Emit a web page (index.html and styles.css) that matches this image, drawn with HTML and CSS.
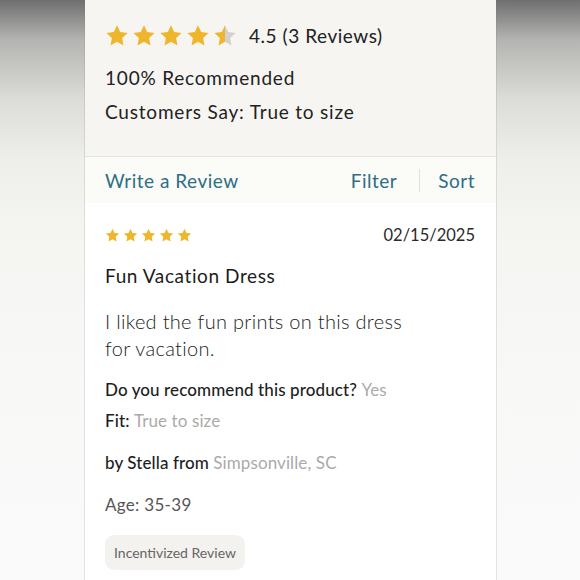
FILE: index.html
```html
<!DOCTYPE html>
<html>
<head>
<meta charset="utf-8">
<link rel="stylesheet" href="styles.css">
</head>
<body>
<div class="page">
  <div class="panel">
    <section class="summary">
      <div class="rating-row">
        <div class="stars-lg">
          <svg viewBox="0 0 24 24" class="star"><path class="on" d="M12 1.2l3.2 6.8 7.4.9-5.5 5.1 1.4 7.4L12 17.8l-6.5 3.6 1.4-7.4L1.4 8.9l7.4-.9z"/></svg>
          <svg viewBox="0 0 24 24" class="star"><path class="on" d="M12 1.2l3.2 6.8 7.4.9-5.5 5.1 1.4 7.4L12 17.8l-6.5 3.6 1.4-7.4L1.4 8.9l7.4-.9z"/></svg>
          <svg viewBox="0 0 24 24" class="star"><path class="on" d="M12 1.2l3.2 6.8 7.4.9-5.5 5.1 1.4 7.4L12 17.8l-6.5 3.6 1.4-7.4L1.4 8.9l7.4-.9z"/></svg>
          <svg viewBox="0 0 24 24" class="star"><path class="on" d="M12 1.2l3.2 6.8 7.4.9-5.5 5.1 1.4 7.4L12 17.8l-6.5 3.6 1.4-7.4L1.4 8.9l7.4-.9z"/></svg>
          <svg viewBox="0 0 24 24" class="star">
            <defs><linearGradient id="half" x1="0" x2="1" y1="0" y2="0"><stop offset="0.5" stop-color="#efb62c"/><stop offset="0.5" stop-color="#d2d1cd"/></linearGradient></defs>
            <path fill="url(#half)" d="M12 1.2l3.2 6.8 7.4.9-5.5 5.1 1.4 7.4L12 17.8l-6.5 3.6 1.4-7.4L1.4 8.9l7.4-.9z"/>
          </svg>
        </div>
        <span class="rating-text">4.5 (3 Reviews)</span>
      </div>
      <p class="summary-line">100% Recommended</p>
      <p class="summary-line">Customers Say: True to size</p>
    </section>
    <nav class="actions">
      <a class="link">Write a Review</a>
      <div class="right-actions">
        <a class="link filter">Filter</a>
        <span class="divider"></span>
        <a class="link sort">Sort</a>
      </div>
    </nav>
    <article class="review">
      <div class="review-head">
        <div class="stars-sm">
          <svg viewBox="0 0 24 24" class="star-sm"><path class="on" d="M12 1.2l3.2 6.8 7.4.9-5.5 5.1 1.4 7.4L12 17.8l-6.5 3.6 1.4-7.4L1.4 8.9l7.4-.9z"/></svg>
          <svg viewBox="0 0 24 24" class="star-sm"><path class="on" d="M12 1.2l3.2 6.8 7.4.9-5.5 5.1 1.4 7.4L12 17.8l-6.5 3.6 1.4-7.4L1.4 8.9l7.4-.9z"/></svg>
          <svg viewBox="0 0 24 24" class="star-sm"><path class="on" d="M12 1.2l3.2 6.8 7.4.9-5.5 5.1 1.4 7.4L12 17.8l-6.5 3.6 1.4-7.4L1.4 8.9l7.4-.9z"/></svg>
          <svg viewBox="0 0 24 24" class="star-sm"><path class="on" d="M12 1.2l3.2 6.8 7.4.9-5.5 5.1 1.4 7.4L12 17.8l-6.5 3.6 1.4-7.4L1.4 8.9l7.4-.9z"/></svg>
          <svg viewBox="0 0 24 24" class="star-sm"><path class="on" d="M12 1.2l3.2 6.8 7.4.9-5.5 5.1 1.4 7.4L12 17.8l-6.5 3.6 1.4-7.4L1.4 8.9l7.4-.9z"/></svg>
        </div>
        <span class="date">02/15/2025</span>
      </div>
      <h3 class="title">Fun Vacation Dress</h3>
      <p class="body">I liked the fun prints on this dress<br>for vacation.</p>
      <p class="meta q1">Do you recommend this product? <span class="muted">Yes</span></p>
      <p class="meta q2">Fit: <span class="muted">True to size</span></p>
      <p class="meta author">by Stella from <span class="muted">Simpsonville, SC</span></p>
      <p class="age">Age: 35-39</p>
      <span class="badge">Incentivized Review</span>
    </article>
  </div>
</div>
</body>
</html>
```

FILE: styles.css
```css
* { box-sizing: border-box; }
html, body { margin: 0; padding: 0; }
body {
  width: 580px;
  height: 580px;
  overflow: hidden;
  font-family: "Lato", "Noto Sans", sans-serif;
  color: #222;
  background: linear-gradient(to bottom, #6f6f6f 0px, #b4b4b2 40px, #dcdcd8 100px, #eeeeea 160px, #f5f5f2 240px, #f8f8f7 380px, #fafafa 580px);
}
.page {
  display: flex;
  justify-content: flex-start;
  padding-left: 85px;
  height: 580px;
}
.panel {
  width: 411px;
  height: 580px;
  background: #ffffff;
  display: flex;
  flex-direction: column;
  box-shadow: -1px 0 0 rgba(120,120,120,0.18), 1px 0 0 rgba(120,120,120,0.18);
}
.summary {
  background: #f6f5f1;
  padding: 18px 20px 27px 20px;
  border-bottom: 1px solid #e3e3de;
}
.rating-row {
  display: flex;
  align-items: center;
  height: 36px;
}
.stars-lg {
  display: flex;
  gap: 3px;
}
.star { width: 24px; height: 24px; display: block; }
.on { fill: #efb62c; }
.rating-text {
  font-size: 19px;
  margin-left: 12px;
  margin-top: -2px;
  letter-spacing: 0.55px;
}
.summary-line {
  margin: 0;
  font-size: 19px;
  line-height: 34px;
  letter-spacing: 0.8px;
}
.summary-line:first-of-type { margin-top: 7px; }
.actions {
  height: 46px;
  background: #fbfbf7;
  display: flex;
  align-items: center;
  justify-content: space-between;
  padding: 0 21px 0 20px;
}
.link {
  color: #2c6f86;
  font-size: 19px;
  letter-spacing: 0.5px;
}
.right-actions {
  display: flex;
  align-items: center;
}
.divider {
  width: 1px;
  height: 23px;
  background: #e2e2dd;
  margin: 0 18px 0 22px;
}
.review {
  background: #fff;
  padding: 24px 21px 0 20px;
  flex: 1;
}
.review-head {
  display: flex;
  justify-content: space-between;
  align-items: center;
  height: 16px;
}
.stars-sm { display: flex; gap: 3px; }
.star-sm { width: 15px; height: 15px; display: block; }
.date {
  font-size: 16.5px;
  color: #2a2a2a;
  letter-spacing: 0px;
}
.title {
  margin: 21px 0 0 0;
  font-size: 19px;
  font-weight: 400;
  color: #1c1c1c;
  line-height: 24px;
  letter-spacing: 0.6px;
}
.body {
  margin: 20px 0 0 0;
  font-size: 20px;
  line-height: 27px;
  color: #222;
  font-weight: 300;
  letter-spacing: 0.3px;
}
.meta {
  margin: 0;
  font-size: 17px;
  font-weight: 500;
  line-height: 22px;
  letter-spacing: 0.1px;
  color: #1e1e1e;
}
.q1 { margin-top: 17px; }
.q2 { margin-top: 9px; }
.author { margin-top: 20px; font-size: 17px; }
.muted { color: #aaaaaa; font-weight: 400; }
.age {
  margin: 20px 0 0 0;
  font-size: 17px;
  line-height: 22px;
  color: #555;
  letter-spacing: 0.3px;
}
.badge {
  display: inline-block;
  margin-top: 19px;
  background: #f3f2ee;
  border-radius: 9px;
  padding: 0 9px;
  height: 35px;
  line-height: 35px;
  font-size: 14px;
  color: #666;
}
```
